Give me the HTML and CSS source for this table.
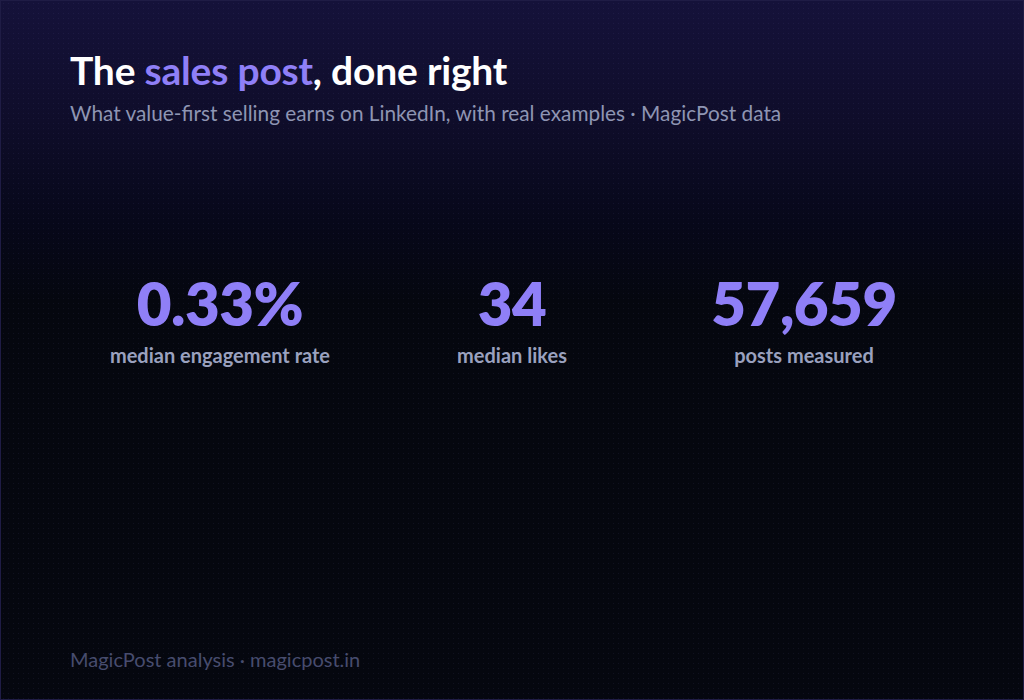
FILE: index.html
```html
<!DOCTYPE html>
<html lang="en">
<head>
<meta charset="utf-8">
<title>The sales post, done right</title>
<link rel="stylesheet" href="styles.css">
</head>
<body>
<main class="card">
  <header class="head">
    <h1 class="title">The <span class="accent">sales post</span>, done right</h1>
    <p class="subtitle">What value-first selling earns on LinkedIn, with real examples · MagicPost data</p>
  </header>
  <section class="stats">
    <div class="stat">
      <div class="stat-value">0.33%</div>
      <div class="stat-label">median engagement rate</div>
    </div>
    <div class="stat">
      <div class="stat-value">34</div>
      <div class="stat-label">median likes</div>
    </div>
    <div class="stat">
      <div class="stat-value">57,659</div>
      <div class="stat-label">posts measured</div>
    </div>
  </section>
  <footer class="foot">MagicPost analysis · magicpost.in</footer>
</main>
</body>
</html>
```

FILE: styles.css
```css
html, body {
  margin: 0;
  padding: 0;
  background: #05070f;
}
* { box-sizing: border-box; }

.card {
  width: 1024px;
  height: 700px;
  border: 1px solid #1f1c45;
  background-color: #05070f;
  background-image:
    radial-gradient(circle, rgba(120, 110, 200, 0.10) 0.6px, transparent 1px),
    linear-gradient(180deg, #15123a 0px, #0f0d2a 120px, #07081a 220px, #05070f 300px, #05070f 700px);
  background-size: 5px 5px, 100% 100%;
  font-family: Lato, "Noto Sans", sans-serif;
  padding: 47px 69px 28px;
  display: flex;
  flex-direction: column;
}

.title {
  margin: 0;
  font-size: 39px;
  font-weight: 700;
  color: #ffffff;
  line-height: 44px;
  letter-spacing: -0.2px;
}
.accent { color: #8f7ff7; }

.subtitle {
  margin: 8px 0 0;
  font-size: 20.8px;
  color: #8e95b3;
  line-height: 26px;
}

.stats {
  margin: 145px auto 0;
  width: 876px;
  display: grid;
  grid-template-columns: repeat(3, 1fr);
}
.stat {
  display: flex;
  flex-direction: column;
  align-items: center;
}
.stat-value {
  font-size: 60px;
  font-weight: 800;
  color: #8f7ff7;
  line-height: 64px;
  letter-spacing: -0.5px;
}
.stat-label {
  margin-top: 8px;
  font-size: 20px;
  font-weight: 700;
  color: #9aa1bf;
  line-height: 24px;
}

.foot {
  margin-top: auto;
  font-size: 20px;
  color: #474c6e;
  line-height: 24px;
}
```
